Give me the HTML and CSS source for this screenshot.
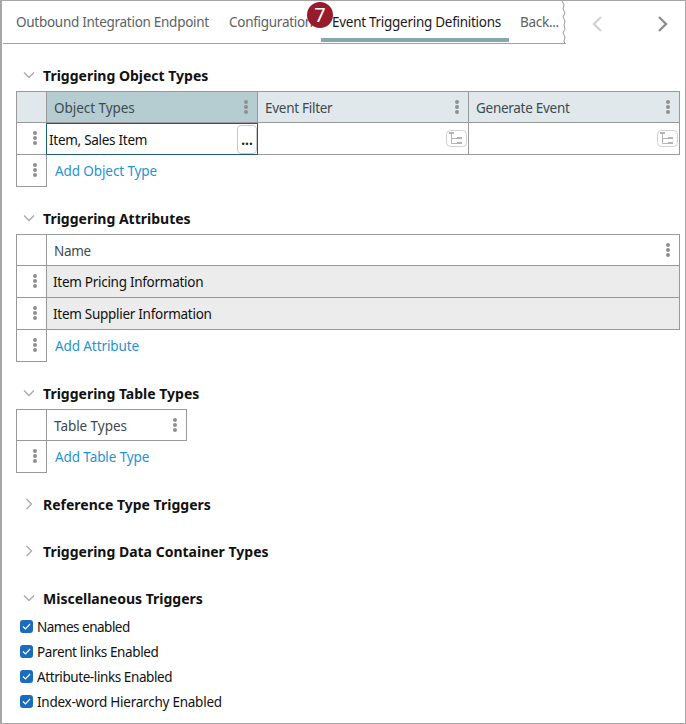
FILE: index.html
```html
<!DOCTYPE html>
<html lang="en">
<head>
<meta charset="utf-8">
<title>Event Triggering Definitions</title>
<link rel="stylesheet" href="styles.css">
</head>
<body>
<div class="frame">
  <div class="tabbar">
    <div class="tabs">
      <span class="tab tab-a">Outbound Integration Endpoint</span>
      <span class="tab tab-b">Configuration</span>
      <span class="tab tab-c active">Event Triggering Definitions</span>
      <span class="tab tab-d">Back...</span>
      <span class="badge">7</span>
      <svg class="tear" width="6" height="43" viewBox="0 0 6 43"><path d="M2 0l2 4-1 4 2 4-2 4 2 4-1 4 1 4-2 4 2 4-1 4 1 3" fill="none" stroke="#9a9a9a"/></svg>
    </div>
    <div class="arrows">
      <svg width="12" height="18" viewBox="0 0 12 18"><path d="M10 2L3 9l7 7" fill="none" stroke="#d4d4d4" stroke-width="2.4"/></svg>
      <svg width="12" height="18" viewBox="0 0 12 18"><path d="M2 2l7 7-7 7" fill="none" stroke="#8f8f8f" stroke-width="2.4"/></svg>
    </div>
  </div>

  <section class="section">
    <h2 class="heading"><svg class="chev" width="12" height="12" viewBox="0 0 12 12"><path d="M1 3.5l5 5 5-5" fill="none" stroke="#a8a8a8" stroke-width="1.3"/></svg>Triggering Object Types</h2>
    <div class="grid g-four">
      <div class="c head blank"></div>
      <div class="c head sel"><span>Object Types</span><i class="kebab"></i></div>
      <div class="c head tint"><span>Event Filter</span><i class="kebab"></i></div>
      <div class="c head tint"><span>Generate Event</span><i class="kebab"></i></div>
      <div class="c row handle"><i class="kebab"></i></div>
      <div class="c row editing"><span class="edit-text">Item, Sales Item</span><span class="dots">...</span></div>
      <div class="c row picker"><svg class="tree" width="21" height="17" viewBox="0 0 21 17"><rect x=".5" y=".5" width="20" height="16" rx="4" fill="#fff" stroke="#d0d0d0"/><path d="M3 2h5v2H3zM11 7h5v2h-5zM11 12h5v2h-5z" fill="#b4b4b4"/><path d="M5.5 4v9.5H11M5.5 8.5H11" fill="none" stroke="#b4b4b4"/></svg></div>
      <div class="c row picker"><svg class="tree" width="21" height="17" viewBox="0 0 21 17"><rect x=".5" y=".5" width="20" height="16" rx="4" fill="#fff" stroke="#d0d0d0"/><path d="M3 2h5v2H3zM11 7h5v2h-5zM11 12h5v2h-5z" fill="#b4b4b4"/><path d="M5.5 4v9.5H11M5.5 8.5H11" fill="none" stroke="#b4b4b4"/></svg></div>
      <div class="c row handle"><i class="kebab"></i></div>
      <a class="add" href="#">Add Object Type</a>
    </div>
  </section>

  <section class="section">
    <h2 class="heading"><svg class="chev" width="12" height="12" viewBox="0 0 12 12"><path d="M1 3.5l5 5 5-5" fill="none" stroke="#a8a8a8" stroke-width="1.3"/></svg>Triggering Attributes</h2>
    <div class="grid g-two">
      <div class="c head blank"></div>
      <div class="c head"><span>Name</span><i class="kebab"></i></div>
      <div class="c row handle"><i class="kebab"></i></div>
      <div class="c row shaded">Item Pricing Information</div>
      <div class="c row handle"><i class="kebab"></i></div>
      <div class="c row shaded">Item Supplier Information</div>
      <div class="c row handle"><i class="kebab"></i></div>
      <a class="add" href="#">Add Attribute</a>
    </div>
  </section>

  <section class="section">
    <h2 class="heading"><svg class="chev" width="12" height="12" viewBox="0 0 12 12"><path d="M1 3.5l5 5 5-5" fill="none" stroke="#a8a8a8" stroke-width="1.3"/></svg>Triggering Table Types</h2>
    <div class="grid g-narrow">
      <div class="c head blank"></div>
      <div class="c head"><span>Table Types</span><i class="kebab"></i></div>
      <div class="c row handle"><i class="kebab"></i></div>
      <a class="add" href="#">Add Table Type</a>
    </div>
  </section>

  <section class="section">
    <h2 class="heading"><svg class="chev" width="12" height="12" viewBox="0 0 12 12"><path d="M3.5 1l5 5-5 5" fill="none" stroke="#a8a8a8" stroke-width="1.3"/></svg>Reference Type Triggers</h2>
  </section>

  <section class="section">
    <h2 class="heading"><svg class="chev" width="12" height="12" viewBox="0 0 12 12"><path d="M3.5 1l5 5-5 5" fill="none" stroke="#a8a8a8" stroke-width="1.3"/></svg>Triggering Data Container Types</h2>
  </section>

  <section class="section">
    <h2 class="heading"><svg class="chev" width="12" height="12" viewBox="0 0 12 12"><path d="M1 3.5l5 5 5-5" fill="none" stroke="#a8a8a8" stroke-width="1.3"/></svg>Miscellaneous Triggers</h2>
    <ul class="checks">
      <li><svg width="13" height="13" viewBox="0 0 13 13"><rect width="13" height="13" rx="3" fill="#1a6dbd"/><path d="M3 6.5l2.5 2.5L10 4" fill="none" stroke="#fff" stroke-width="1.2"/></svg>Names enabled</li>
      <li><svg width="13" height="13" viewBox="0 0 13 13"><rect width="13" height="13" rx="3" fill="#1a6dbd"/><path d="M3 6.5l2.5 2.5L10 4" fill="none" stroke="#fff" stroke-width="1.2"/></svg>Parent links Enabled</li>
      <li><svg width="13" height="13" viewBox="0 0 13 13"><rect width="13" height="13" rx="3" fill="#1a6dbd"/><path d="M3 6.5l2.5 2.5L10 4" fill="none" stroke="#fff" stroke-width="1.2"/></svg>Attribute-links Enabled</li>
      <li><svg width="13" height="13" viewBox="0 0 13 13"><rect width="13" height="13" rx="3" fill="#1a6dbd"/><path d="M3 6.5l2.5 2.5L10 4" fill="none" stroke="#fff" stroke-width="1.2"/></svg>Index-word Hierarchy Enabled</li>
    </ul>
  </section>
</div>
</body>
</html>
```
FILE: styles.css
```css
* { box-sizing: border-box; }
html, body { margin: 0; padding: 0; background: #fff; }
body {
  font-family: "Noto Sans", "Open Sans", sans-serif;
  font-size: 13.5px;
  letter-spacing: -0.28px;
  color: #1a1a1a;
}
.frame {
  width: 686px;
  height: 724px;
  border: 1px solid #a6a6a6;
  border-left-width: 2px;
  overflow: hidden;
}
.tabbar { display: flex; height: 43px; }
.tabs {
  position: relative;
  display: flex;
  width: 563px;
  margin-left: 1px;
  height: 43px;
  border-bottom: 1px solid #8fa9ad;
}
.tab {
  display: block;
  height: 42px;
  line-height: 42px;
  color: #5c6266;
  white-space: nowrap;
}
.tab-a { padding-left: 13px; width: 226px; }
.tab-b { width: 92px; overflow: hidden; }
.tab-c { width: 188px; padding-left: 11px; color: #1a1a1a; border-bottom: 4px solid #84a8ad; height: 41px; }
.tab-d { padding-left: 11px; }
.badge {
  position: absolute;
  left: 304px;
  top: 1px;
  width: 26px;
  height: 26px;
  border-radius: 50%;
  background: #981b2c;
  color: #fff;
  font-size: 20px;
  line-height: 26px;
  text-align: center;
  letter-spacing: 0;
}
.tear { position: absolute; right: 0; top: 0; }
.arrows {
  display: flex;
  gap: 54px;
  padding: 14px 0 0 25px;
}
.section { padding: 0 0 0 14px; margin-top: 17px; }
.heading {
  display: flex;
  align-items: center;
  gap: 8px;
  height: 30px;
  margin: 0;
  padding: 0 0 2px 7px;
  font-size: 14px;
  font-weight: 700;
  color: #111;
  letter-spacing: 0;
}
.chev { flex: none; }
.grid {
  display: grid;
  border-top: 1px solid #999;
  border-left: 1px solid #999;
}
.g-four { width: 664px; grid-template-columns: 30px 211px 211px 211px; }
.g-two { width: 664px; grid-template-columns: 30px 633px; }
.g-narrow { width: 171px; grid-template-columns: 30px 140px; }
.c {
  display: flex;
  align-items: center;
  border-right: 1px solid #999;
  border-bottom: 1px solid #999;
}
.head {
  height: 31px;
  justify-content: space-between;
  padding: 2px 9px 0 7px;
  color: #3d4a50;
}
.head .kebab { margin-top: -2px; }
.sel, .g-narrow .head { letter-spacing: -0.05px; }
.tint { background: #e0e8eb; }
.g-four .blank { background: #e0e8eb; }
.sel { background: #b5ccd1; }
.row { height: 32px; }
.handle { justify-content: center; padding: 0 0 2px 6px; }
.shaded { background: #ececec; padding-left: 6px; color: #111; }
.editing {
  padding: 2px 0 0 1px;
  background: #fff;
  border: 1px solid #1c5f66;
  justify-content: space-between;
  margin-left: -1px;
  color: #111;
}
.edit-text { padding-left: 1px; }
.dots {
  width: 20px;
  height: 29px;
  margin-top: -2px;
  border: 1px solid #c8c8c8;
  border-radius: 4px;
  text-align: center;
  line-height: 29px;
  font-weight: 700;
  letter-spacing: 0;
  color: #222;
}
.picker { justify-content: flex-end; padding-right: 1px; }
.add {
  align-self: center;
  padding-left: 8px;
  color: #1f93d4;
  text-decoration: none;
  letter-spacing: -0.1px;
}
.kebab {
  display: block;
  flex: none;
  width: 4px;
  height: 4px;
  border-radius: 50%;
  background: #8f8f8f;
  box-shadow: 0 -5px 0 #8f8f8f, 0 5px 0 #8f8f8f;
}
.checks { list-style: none; margin: 0; padding: 0 0 0 4px; }
.checks li {
  display: flex;
  align-items: center;
  gap: 4px;
  height: 25px;
  color: #111;
}
.checks li:nth-child(1) { letter-spacing: -0.5px; }
.checks li:nth-child(2) { letter-spacing: -0.38px; }
.checks li:nth-child(3) { letter-spacing: -0.41px; }
.checks li:nth-child(4) { letter-spacing: -0.24px; }
```
